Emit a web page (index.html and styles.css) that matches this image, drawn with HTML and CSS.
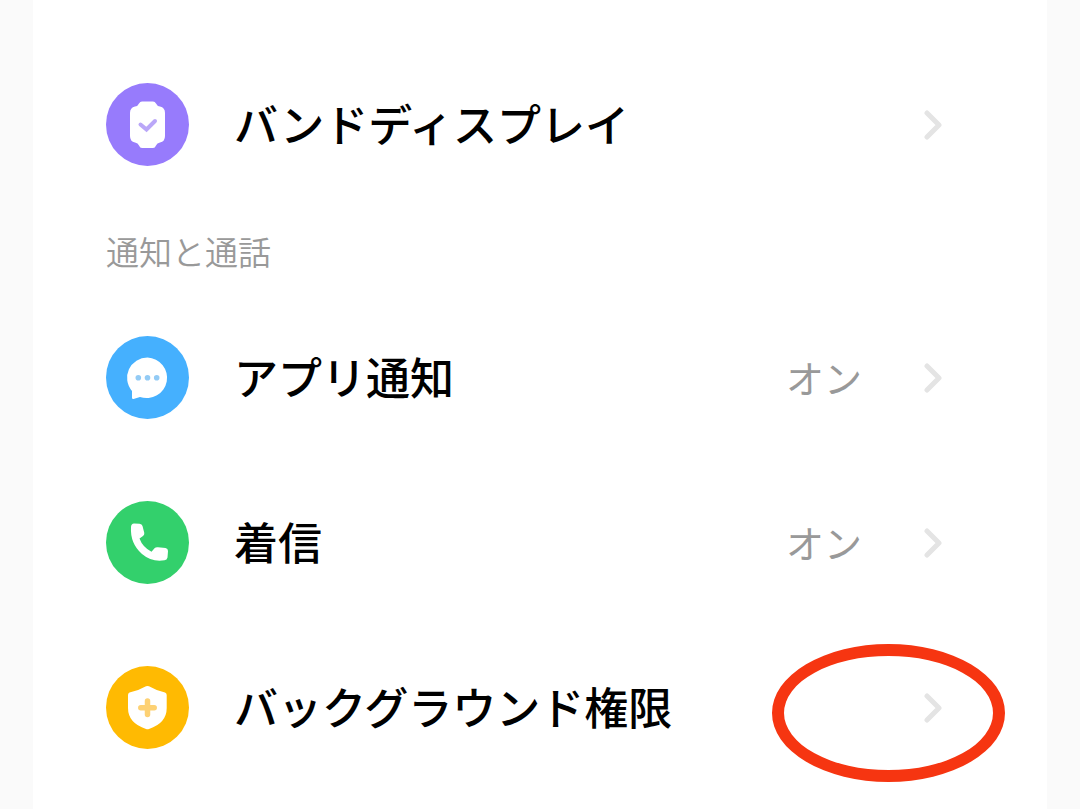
FILE: index.html
```html
<!DOCTYPE html>
<html lang="ja">
  <head>
    <meta charset="UTF-8" />
    <meta name="viewport" content="width=device-width, initial-scale=1.0" />
    <title>バンドディスプレイ</title>
    <link rel="stylesheet" href="styles.css">
  </head>

  <body>
    <main class="sheet">
      <a class="row" href="#display">
        <svg class="icon" viewBox="0 0 83 83" aria-hidden="true">
          <circle cx="41.5" cy="41.5" r="41.5" fill="#977bfc" />
          <path fill="#fff" d="M36 18.500H47Q49 18.500 50 20.500Q51 23 54 23.500Q59 24.500 59 30V53Q59 58.500 54 59.500Q51 60 50 62.500Q49 65 47 65H36Q34 65 33 62.500Q32 60 29 59.500Q24 58.500 24 53V30Q24 24.500 29 23.500Q32 23 33 20.500Q34 18.500 36 18.500Z" />
          <path fill="none" stroke="#baa7f8" stroke-width="4" stroke-linecap="round" d="M34.500 41.500L40.500 46.500L49 38" />
        </svg>
        <span class="title">バンドディスプレイ</span>
        <svg class="chevron" viewBox="0 0 18 30" aria-hidden="true">
          <path d="M3 3L15 15L3 27" />
        </svg>
      </a>

      <h2 class="section">通知と通話</h2>

      <a class="row" href="#notifications">
        <svg class="icon" viewBox="0 0 83 83" aria-hidden="true">
          <circle cx="41.5" cy="41.5" r="41.5" fill="#45b0fe" />
          <path fill="#fff" d="M41.500 21.500A20.500 20.300 0 1 1 34 61L27.500 63Q26 63.300 26 61.500V55A20.500 20.300 0 0 1 41.500 21.500Z" />
          <g fill="#93cbf5">
            <circle cx="32.3" cy="41.8" r="2.8" />
            <circle cx="41.5" cy="41.8" r="2.8" />
            <circle cx="50.7" cy="41.8" r="2.8" />
          </g>
        </svg>
        <span class="title">アプリ通知</span>
        <span class="value">オン</span>
        <svg class="chevron" viewBox="0 0 18 30" aria-hidden="true">
          <path d="M3 3L15 15L3 27" />
        </svg>
      </a>

      <a class="row" href="#calls">
        <svg class="icon" viewBox="0 0 83 83" aria-hidden="true">
          <circle cx="41.5" cy="41.5" r="41.5" fill="#33d06c" />
          <path fill="#fff" d="M28 22.500L33.500 22.700Q36 23 36.500 25L38.300 32Q38.500 34 37 35L33.500 37.500Q36.500 46 45.500 50.800L48.500 47.200Q49.800 46 52 46.300L59.500 47Q62 47.500 62 50L61.500 56.500Q61 59 58.500 59.300Q46 61.500 36 53Q24 42.500 25 26Q25.200 22.700 28 22.500Z" />
        </svg>
        <span class="title">着信</span>
        <span class="value">オン</span>
        <svg class="chevron" viewBox="0 0 18 30" aria-hidden="true">
          <path d="M3 3L15 15L3 27" />
        </svg>
      </a>

      <a class="row" href="#background">
        <svg class="icon" viewBox="0 0 83 83" aria-hidden="true">
          <circle cx="41.5" cy="41.5" r="41.5" fill="#ffba02" />
          <path fill="#fff" d="M40 20.300Q41.500 19.500 43 20.300Q50 24.500 59 26.500Q60.700 27 60.700 29V42Q60.700 57 43 63Q41.500 63.500 40 63Q22 57 22 42V29Q22 27 23.500 26.500Q33 24.500 40 20.300Z" />
          <path fill="none" stroke="#fdd173" stroke-width="5.500" stroke-linecap="round" d="M41.500 35V48.500M34.800 41.800H48.200" />
        </svg>
        <span class="title">バックグラウンド権限</span>
        <svg class="chevron" viewBox="0 0 18 30" aria-hidden="true">
          <path d="M3 3L15 15L3 27" />
        </svg>
        <span class="marker"></span>
      </a>
    </main>
  </body>
</html>
```

FILE: styles.css
```css
/* Page */
body {
  margin: 0;
  background-color: #fafafa;
  font-family: "Noto Sans CJK JP", sans-serif;
  color: #000;
}

.sheet {
  box-sizing: border-box;
  min-height: 100vh;
  margin: 0 33px;
  padding: 42px 0 19px;
  background-color: #fff;
  overflow: hidden;
}

/* Setting rows */
.row {
  position: relative;
  display: flex;
  align-items: center;
  height: 165px;
  padding: 0 105px 0 73px;
  color: inherit;
  text-decoration: none;
}

.icon {
  flex: none;
  width: 83px;
  height: 83px;
}

.title {
  flex: 1;
  margin-left: 45px;
  padding-bottom: 4px;
  font-size: 44px;
  line-height: 64px;
  font-weight: 500;
}

.value {
  padding-bottom: 2px;
  color: #999;
  font-size: 38px;
  line-height: 56px;
}

.chevron {
  flex: none;
  width: 18px;
  height: 30px;
  margin-left: 62px;
}

.chevron path {
  fill: none;
  stroke: #e4e4e4;
  stroke-width: 5;
  stroke-linecap: round;
  stroke-linejoin: round;
}

/* Section heading */
.section {
  margin: 0;
  padding: 0 73px;
  color: #999;
  font-size: 33px;
  line-height: 88px;
  font-weight: 350;
}

/* Red ring around the arrow of the last row */
.marker {
  position: absolute;
  top: 19px;
  right: 42px;
  box-sizing: border-box;
  width: 233px;
  height: 138px;
  border: 12px solid #f63511;
  border-radius: 50%;
}
```
